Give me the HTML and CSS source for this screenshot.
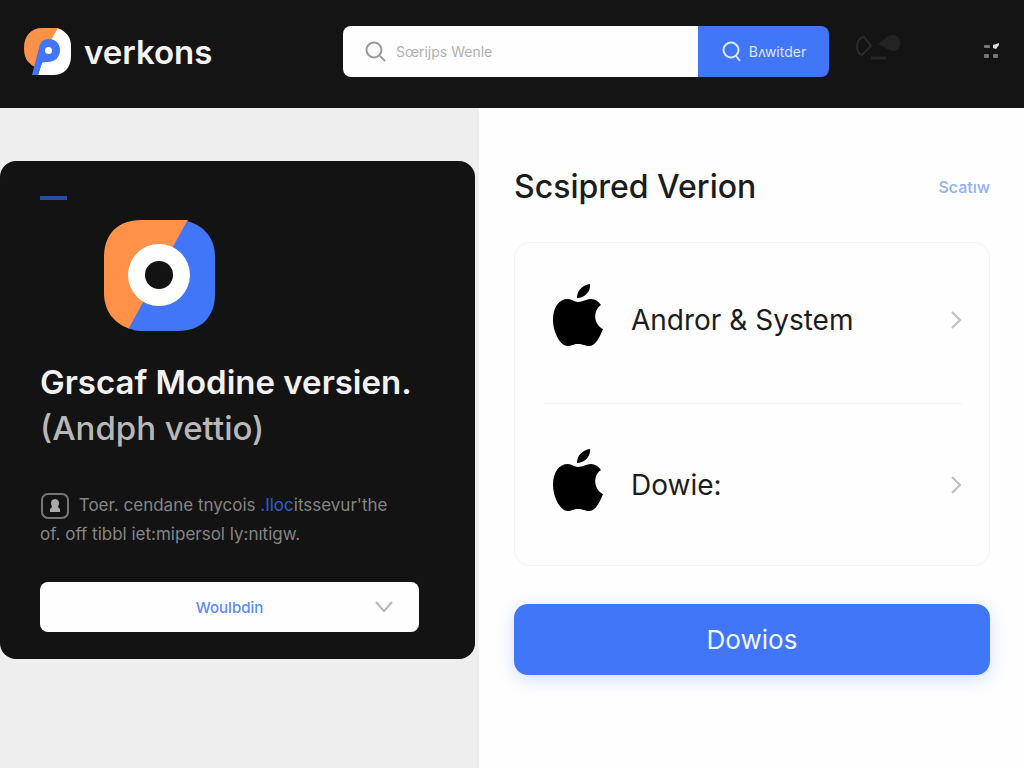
FILE: index.html
```
<!DOCTYPE html>
<html lang="en">
<head>
<meta charset="utf-8">
<meta name="viewport" content="width=device-width, initial-scale=1">
<title>verkons</title>
<link rel="stylesheet" href="styles.css">
</head>
<body>
<header class="topbar">
  <a class="brand" href="#">
    <svg class="brand-mark" viewBox="0 0 47 47" aria-hidden="true">
      <path d="M33 0C42 3 47 9 47 18v10c0 12-7 19-18 19H14L24 14z" fill="#fff"/>
      <path d="M18 0H34L27 12C18 14 14 26 11 39C3 35 0 29 0 20C0 8 7 0 18 0z" fill="#ff9248"/>
      <path d="M25 11c7 0 11 5 11 11 0 7-5 12-12 12-3 0-5 0-6 1l-4 12H8L15 20c1-6 4-9 10-9z" fill="#4176f8"/>
      <circle cx="24.500" cy="22.500" r="3.500" fill="#fff"/>
    </svg>
    <span class="brand-name">verkons</span>
  </a>
  <form class="search" role="search">
    <label class="search-field">
      <svg class="icon-search" viewBox="0 0 22 22" aria-hidden="true"><circle cx="9" cy="9" r="7.500"/><path d="M15 15l5 5"/></svg>
      <input class="search-input" type="search" placeholder="Sœrijps Wenle" aria-label="Search">
    </label>
    <button class="search-button" type="submit">
      <svg class="icon-search" viewBox="0 0 22 22" aria-hidden="true"><circle cx="10" cy="9" r="7.500"/><path d="M15 15l4 5"/></svg>
      Bʌwitder
    </button>
  </form>
  <button class="icon-button ghost" type="button" aria-label="Account">
    <svg width="46" height="28" viewBox="0 0 46 28" aria-hidden="true">
      <path d="M9 3C0 4 0 20 7 21l9-9z" fill="none" stroke="#2c2c2c" stroke-width="2"/>
      <path d="M23 10C29 7 31 1 38 1c10 0 9 16 1 16-5 0-9-4-16-7z" fill="#232323"/>
      <path d="M16 24h15" stroke="#262626" stroke-width="3"/>
    </svg>
  </button>
  <button class="icon-button menu" type="button" aria-label="Menu">
    <svg width="17" height="16" viewBox="0 0 17 16" aria-hidden="true">
      <g fill="#777"><rect x="1" y="2" width="6" height="3" rx="1"/><rect x="1" y="11" width="5" height="4" rx="1"/><rect x="10" y="11" width="5" height="4" rx="1"/></g>
      <path d="M10 5V2l6-2v2l-3 4z" fill="#e9d8cc"/>
    </svg>
  </button>
</header>
<main class="layout">
  <section class="side">
    <article class="promo">
      <span class="accent"></span>
      <svg class="promo-logo" viewBox="0 0 111 111" aria-hidden="true">
        <path d="M37 0H84L55 58 26 109C9 103 0 90 0 73V37C0 14 14 0 37 0z" fill="#ff9248"/>
        <path d="M83 1C101 6 111 19 111 37v37c0 23-14 37-37 37H37q-7 0-12-3z" fill="#4176f8"/>
        <circle cx="55" cy="55" r="31" fill="#fff"/><circle cx="55" cy="55" r="14" fill="#131313"/>
      </svg>
      <h1 class="promo-title">Grscaf Modine versien.<span class="promo-subtitle">(Andph vettio)</span></h1>
      <p class="promo-text">
        <svg class="badge" viewBox="0 0 30 28" aria-hidden="true"><rect x="2" y="2" width="26" height="24" rx="6" fill="none" stroke="#777" stroke-width="2"/><path d="M10 20v-3l2-2q-3-7 3-8 6 1 3 8l2 2v3z" fill="#aaa"/></svg>
        Toer. cendane tnycois <a class="text-link" href="#">.Iloc</a>itssevur'the<br>of. off tibbl iet:mipersol ly:nıtigw.
      </p>
      <div class="picker">
        <select class="picker-select" aria-label="Version"><option>Woulbdin</option></select>
        <svg class="picker-arrow" viewBox="0 0 18 12" aria-hidden="true"><path d="M1 1l8 9 8-9"/></svg>
      </div>
    </article>
  </section>
  <section class="content">
    <div class="content-head">
      <h2 class="content-title">Scsipred Verion</h2>
      <a class="content-link" href="#">Scatıw</a>
    </div>
    <nav class="options" aria-label="Versions">
      <a class="option" href="#">
        <svg class="apple" viewBox="0 0 50 72" aria-hidden="true"><path d="M24 14C24 6 30 1 37 0C38 8 31 14 24 14zM25 18C30 18 33 15 38 15q6 0 10 6C40 26 40 40 50 45C46 55 42 62 36 62C32 62 30 60 25 60S19 62 15 62C7 62 0 48 0 36C0 23 6 15 15 15C19 15 21 18 25 18z"/></svg>
        <span class="option-name">Andror &amp; System</span>
        <svg class="chevron" viewBox="0 0 12 18" aria-hidden="true"><path d="M2 1l8 8-8 8"/></svg>
      </a>
      <a class="option" href="#">
        <svg class="apple" viewBox="0 0 50 72" aria-hidden="true"><path d="M24 14C24 6 30 1 37 0C38 8 31 14 24 14zM25 18C30 18 33 15 38 15q6 0 10 6C40 26 40 40 50 45C46 55 42 62 36 62C32 62 30 60 25 60S19 62 15 62C7 62 0 48 0 36C0 23 6 15 15 15C19 15 21 18 25 18z"/></svg>
        <span class="option-name">Dowie:</span>
        <svg class="chevron" viewBox="0 0 12 18" aria-hidden="true"><path d="M2 1l8 8-8 8"/></svg>
      </a>
    </nav>
    <button class="primary" type="button">Dowios</button>
  </section>
</main>
</body>
</html>
```
FILE: styles.css
```
* { box-sizing: border-box; }
body {
  margin: 0;
  min-height: 100vh;
  display: flex;
  flex-direction: column;
  font-family: Inter, "Liberation Sans", sans-serif;
  color: #1c1c1c;
  background: #fefefe;
}
a { color: inherit; text-decoration: none; }
button, input, select { font: inherit; border: 0; }
button { cursor: pointer; }
svg { flex: none; }

.topbar {
  display: flex;
  align-items: flex-start;
  padding: 26px 24px 31px;
  background: #141414;
}
.brand {
  flex: 0 1 319px;
  display: flex;
  align-items: center;
  gap: 13px;
  height: 51px;
  color: #f4f4f4;
}
.brand-mark { width: 47px; height: 47px; }
.brand-name { font-size: 33px; font-weight: 600; line-height: 40px; }
.search {
  flex: 0 1 486px;
  display: flex;
  height: 51px;
  border-radius: 8px;
  overflow: hidden;
}
.search-field {
  flex: 1;
  min-width: 0;
  display: flex;
  align-items: center;
  gap: 9px;
  padding: 0 22px;
  background: #fefefe;
  color: #999;
}
.icon-search { width: 22px; height: 22px; fill: none; stroke: currentColor; stroke-width: 2; }
.search-input { flex: 1; min-width: 0; padding: 0; background: none; font-size: 14px; outline: 0; }
.search-input::placeholder { color: #b0b0b0; opacity: 1; }
.search-button {
  flex: 0 0 131px;
  display: flex;
  align-items: center;
  justify-content: center;
  gap: 6px;
  padding: 0;
  background: #4176f8;
  color: #dbe5ff;
  font-size: 14px;
}
.icon-button { display: flex; padding: 0; background: none; }
.ghost { margin: 8px 0 0 26px; }
.menu { margin: 17px 0 0 auto; }

.layout { flex: 1; display: grid; grid-template-columns: 479fr 545fr; }
.side { padding: 53px 4px 40px 0; background: #eee; }
.promo {
  display: flex;
  flex-direction: column;
  padding: 35px 56px 27px 40px;
  border-radius: 16px;
  background: #131313;
}
.accent { width: 27px; height: 4px; background: #254f9c; }
.promo-logo { width: 111px; height: 111px; margin: 20px 0 0 64px; }
.promo-title { margin: 28px 0 0; font-size: 33px; font-weight: 600; line-height: 46px; color: #f2f2f2; white-space: nowrap; }
.promo-subtitle { display: block; font-weight: 500; color: #b8b8b8; }
.promo-text { margin: 40px 0 0; font-size: 17px; line-height: 28px; color: #858585; white-space: nowrap; }
.badge { width: 30px; height: 28px; margin-right: 4px; vertical-align: middle; }
.text-link { color: #2b5fd0; }
.picker { display: grid; margin-top: 34px; }
.picker-select {
  grid-area: 1 / 1;
  width: 100%;
  height: 50px;
  padding: 0 40px;
  appearance: none;
  border-radius: 8px;
  background: #fefefe;
  color: #5b8bf4;
  font-size: 15px;
  font-weight: 500;
  text-align-last: center;
}
.picker-arrow {
  grid-area: 1 / 1;
  place-self: center end;
  width: 18px;
  height: 12px;
  margin-right: 26px;
  fill: none;
  stroke: #b5b5b5;
  stroke-width: 2;
  pointer-events: none;
}

.content { padding: 58px 34px 40px 35px; }
.content-head { display: flex; align-items: center; justify-content: space-between; height: 42px; }
.content-title { margin: 0; font-size: 32px; font-weight: 500; line-height: 42px; }
.content-link { font-size: 16px; font-weight: 500; color: #8fb0fa; }
.options {
  margin-top: 34px;
  padding: 0 27px 0 29px;
  border: 1px solid #f3f3f3;
  border-radius: 16px;
}
.option { display: flex; align-items: center; height: 161px; padding-left: 9px; }
.option:first-child { padding-bottom: 6px; border-bottom: 1px solid #f3f3f3; }
.apple { width: 50px; height: 72px; margin-right: 28px; fill: #000; }
.option-name { flex: 1; font-size: 28px; line-height: 36px; }
.chevron { width: 12px; height: 18px; fill: none; stroke: #bdbdbd; stroke-width: 2; }
.primary {
  width: 100%;
  height: 71px;
  margin-top: 38px;
  border-radius: 14px;
  background: #4176f8;
  color: #f1f5ff;
  font-size: 26px;
  box-shadow: 0 4px 16px #4176f840;
}
```
